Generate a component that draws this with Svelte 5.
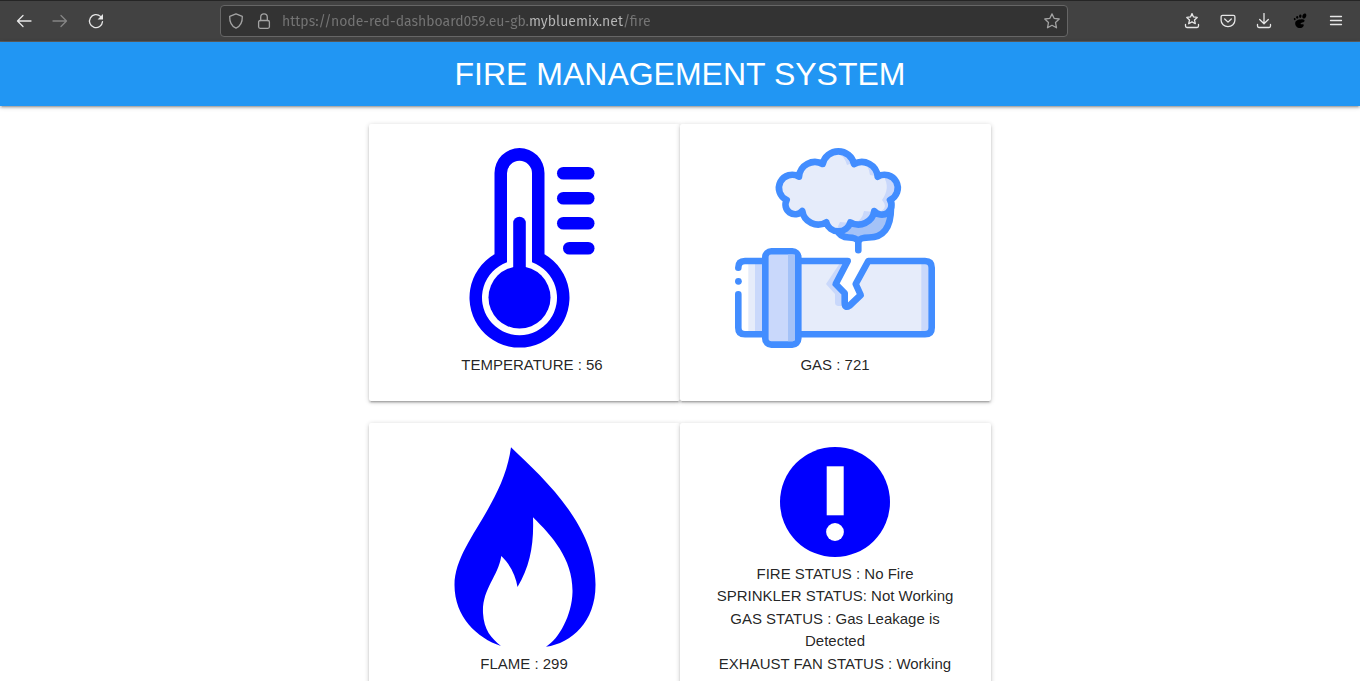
<script lang="ts">
  const url = 'https://node-red-dashboard059.eu-gb.mybluemix.net/fire';

  const readings = { temperature: 56, gas: 721, flame: 299 };

  const statuses = [
    'FIRE STATUS : No Fire',
    'SPRINKLER STATUS: Not Working',
    'GAS STATUS : Gas Leakage is Detected',
    'EXHAUST FAN STATUS : Working'
  ];
</script>

<div class="toolbar">
  <div class="tools">
    <button class="tool" aria-label="Back">
      <svg viewBox="0 0 16 16"><path d="M15 8H1.8M7 2.5 1.5 8 7 13.5" /></svg>
    </button>
    <button class="tool" aria-label="Forward" disabled>
      <svg viewBox="0 0 16 16"><path d="M1 8h13.2M9 2.5 14.5 8 9 13.5" /></svg>
    </button>
    <button class="tool" aria-label="Reload">
      <svg viewBox="0 0 16 16"><path d="M12.5 3.4A6.5 6.5 0 1 0 14.5 8.6" /><path d="M15 1v5.4H9.6z" fill="currentColor" stroke="none" /></svg>
    </button>
  </div>

  <div class="address">
    <div class="site">
      <svg viewBox="0 0 16 16"><path d="M8 .8 14.3 3.4C14.5 9 12.5 13 8 15.2 3.5 13 1.5 9 1.7 3.4z" /></svg>
      <svg viewBox="0 0 16 16"><rect x="2.6" y="7.5" width="10.8" height="7.8" rx="1.5" /><path d="M4.7 7.5V4.2a3.3 3.3 0 0 1 6.6 0v3.3" /></svg>
    </div>
    <input type="text" aria-label="Address" value={url} spellcheck="false" />
    <button class="bookmark" aria-label="Bookmark this page">
      <svg viewBox="0 0 16 16"><path d="M8 .9 10.1 5.3 15.2 6 11.5 9.5 12.5 14.8 8 12.3 3.5 14.8 4.5 9.5.8 6l5.1-.7z" /></svg>
    </button>
  </div>

  <div class="tools">
    <button class="tool" aria-label="Bookmarks">
      <svg viewBox="0 0 16 16"><path d="M8 .6 9.5 3.9 13.2 4.400 10.500 6.900 11.300 10.700 8 8.900 4.700 10.700 5.500 6.900 2.800 4.400 6.500 3.900z" /><path d="M1.500 11.500v1.600q0 1.400 1.400 1.400h10.200q1.400 0 1.400-1.400v-1.600" /></svg>
    </button>
    <button class="tool" aria-label="Save to Pocket">
      <svg viewBox="0 0 16 16"><path d="M2.6 2.3h10.8q1.5 0 1.5 1.5v3.4a6.9 6.4 0 0 1-13.8 0V3.8q0-1.5 1.5-1.5z" /><path d="M4.7 6 8 9.1 11.3 6" /></svg>
    </button>
    <button class="tool" aria-label="Downloads">
      <svg viewBox="0 0 16 16"><path d="M8 .5v10M3.7 6.500 8 10.800l4.300-4.300M1.500 11.500v1.600q0 1.400 1.400 1.400h10.200q1.400 0 1.400-1.400v-1.600" /></svg>
    </button>
    <button class="tool" aria-label="GNOME Shell integration">
      <svg viewBox="0 0 16 16" class="foot">
        <ellipse cx="12.300" cy="3" rx="1.800" ry="2.600" transform="rotate(22 12.300 3)" />
        <ellipse cx="8.300" cy="3.200" rx="1.200" ry="1.700" transform="rotate(10 8.300 3.200)" />
        <ellipse cx="5.200" cy="4.300" rx="1" ry="1.400" />
        <ellipse cx="2.700" cy="6.100" rx=".9" ry="1.200" transform="rotate(-15 2.700 6.100)" />
        <path d="M3.200 9.900C3.400 7.300 6.500 6.600 9.500 6.300 12 6.100 13.300 7.200 12.300 8.500 11.500 9.600 8.700 9.500 8.500 10.800 8.400 11.900 10.700 11 11.500 11.400 12.500 12.500 10.500 15 8.200 15 5 15 3 12.500 3.200 9.900z" />
      </svg>
    </button>
    <button class="tool" aria-label="Menu">
      <svg viewBox="0 0 16 16"><path d="M2.500 3.500h11M2.500 7.500h11M2.500 11.500h11" /></svg>
    </button>
  </div>
</div>

<header>
  <h1>FIRE MANAGEMENT SYSTEM</h1>
</header>

<main>
  <section class="card inset">
    <svg class="picture blue" viewBox="0 0 200 200" aria-hidden="true">
      <path d="M62.5 106.3V25a25 25 0 0 1 50 0v81.3A50 50 0 1 1 62.5 106.3z" />
      <path fill="#fff" d="M75 114.3V25.3a12.5 12.5 0 0 1 25 0v89A37.5 37.5 0 1 1 75 114.3z" />
      <circle cx="87.5" cy="149.5" r="31" />
      <rect x="81.2" y="68.7" width="12.6" height="60" rx="6.3" />
      <rect x="125" y="19" width="37.500" height="12.6" rx="6.3" />
      <rect x="125" y="44" width="37.500" height="12.6" rx="6.3" />
      <rect x="125" y="69" width="37.500" height="12.6" rx="6.3" />
      <rect x="131" y="94" width="31.500" height="12.6" rx="6.3" />
    </svg>
    <p>TEMPERATURE : {readings.temperature}</p>
  </section>

  <section class="card">
    <svg class="picture" viewBox="0 0 200 200" aria-hidden="true">
      <g stroke="#428dff" stroke-width="6.6" stroke-linecap="round" stroke-linejoin="round" fill="none">
        <path fill="#a4c2f7" d="M156 50V60C156 80 148 89.5 134 89.5C129 89.5 125 90 123.3 93C121 90 118 89.5 114 89.5C108 89.5 104 87 102 82z" />
        <path d="M123.3 92v10.3" />
        <path fill="#e6ecfa" stroke="none" d="M64 28.7A13.2 13.2 0 1 0 51.7 52A9.600 9.600 0 0 0 67.3 63A16 16 0 0 0 91.3 74.3A12.500 12.500 0 0 0 115.3 74.3A16 16 0 0 0 139.3 63A9.600 9.600 0 0 0 155 52A13.2 13.2 0 1 0 142.7 28.7A16 16 0 0 0 119 16A16 16 0 0 0 87.7 16A16 16 0 0 0 64 28.7z" />
        <g fill="#c9d8fb" stroke="none">
          <path d="M104 6q11 2 14 9l-6 2q-2-8-8-11z" />
          <path d="M126 12q14 3 15 16l-6-1q-1-10-9-15z" />
          <path d="M148 28a13 13 0 0 1 8 24l-4 10-8 2q10-4 3-12 9-13 1-24z" />
          <path d="M139 64q-6 14-21 12 9-3 11-13z" />
          <path d="M115 75q-5 8-13 8 1-6 3-9z" />
        </g>
        <path d="M64 28.7A13.2 13.2 0 1 0 51.7 52A9.600 9.600 0 0 0 67.3 63A16 16 0 0 0 91.3 74.3A12.500 12.500 0 0 0 115.3 74.3A16 16 0 0 0 139.3 63A9.600 9.600 0 0 0 155 52A13.2 13.2 0 1 0 142.7 28.7A16 16 0 0 0 119 16A16 16 0 0 0 87.7 16A16 16 0 0 0 64 28.7z" />
        <path stroke="none" fill="#e6ecfa" d="M13.3 116h7v68h-7z" />
        <path stroke="none" fill="#c9d8fb" d="M20 116h8v68h-8z" />
        <path stroke="none" fill="#e6ecfa" d="M65 113h47.7L100.7 136l9 9.3.3 13h4l12-11.3-5-11L133.3 113h63v73H65z" />
        <path stroke="none" fill="#c9d8fb" d="M186.3 115h8v70h-8zM105 115 91 136l9 10v8.500q0 3 3 3.500h5l2-12.500-9.300-9.500L112 115z" />
        <path d="M64 113h48.700L100.700 136l9 9.300V155q0 6 5 2.500l11-10.500-5-11L133.300 113h56.700q6.700 0 6.700 6.700v60q0 6.600-6.700 6.600H64" />
        <path d="M3.300 119.700q0-6.700 6.700-6.700h20M3.300 146.300v33.400q0 6.600 6.700 6.600h20" />
        <circle cx="3.400" cy="133.300" r="3.400" fill="#428dff" stroke="none" />
        <rect x="30.300" y="103.300" width="33" height="93.300" rx="6" fill="#c9d8fb" />
        <path stroke="none" fill="#a4c2f7" d="M53 106.600h7V191q0 2.300-2.300 2.300H53z" />
      </g>
    </svg>
    <p>GAS : {readings.gas}</p>
  </section>

  <section class="card">
    <svg class="picture blue" viewBox="0 0 200 200" aria-hidden="true">
      <path d="M87 .3C119 31 171 77 171.500 137C172 174 148 196 122 199.700C135 192 148 168 148.500 145C149 112 128 89 109 70.300C110 98 106 119 93.500 140C92 129 86 117 77.300 109C74 130 58 142 59 166C60 183 67 191 77 199C53 191 30.500 170 30.500 138C30.500 97 79 60 87 .3z" />
    </svg>
    <p>FLAME : {readings.flame}</p>
  </section>

  <section class="card">
    <svg class="picture small blue" viewBox="0 0 110 110" aria-hidden="true">
      <circle cx="55" cy="55" r="55" />
      <path fill="#fff" d="M46.700 19.300h17v49h-17z" />
      <circle fill="#fff" cx="55" cy="85" r="8.900" />
    </svg>
    {#each statuses as status}
      <p>{status}</p>
    {/each}
  </section>
</main>

<style>
  :global(html) {
    scrollbar-width: none;
  }

  :global(body) {
    margin: 0;
    background: #fff;
    color: rgba(0, 0, 0, 0.87);
    font: 15px/1.5 'Liberation Sans', Arial, sans-serif;
  }

  .toolbar {
    display: flex;
    align-items: center;
    justify-content: space-between;
    box-sizing: border-box;
    height: 42px;
    padding: 0 6px;
    border-top: 1px solid #252525;
    border-bottom: 1px solid #5c5c5c;
    background: #424242;
  }

  .tools {
    display: flex;
  }

  button {
    display: grid;
    place-items: center;
    padding: 0;
    border: 0;
    background: none;
    color: #e6e6e6;
  }

  .tool {
    width: 36px;
    height: 32px;
  }

  .tool:disabled {
    color: #858585;
  }

  .toolbar svg {
    flex: none;
    width: 16px;
    height: 16px;
    fill: none;
    stroke: currentColor;
    stroke-width: 1.3;
    stroke-linecap: round;
    stroke-linejoin: round;
  }

  .toolbar .foot {
    fill: #000;
    stroke: none;
  }

  .address {
    display: flex;
    align-items: center;
    gap: 10px;
    box-sizing: border-box;
    width: 63%;
    max-width: 848px;
    height: 32px;
    padding: 0 7px;
    border: 1px solid #666;
    border-radius: 4px;
    background: #333;
    color: #a3a3a3;
  }

  .site {
    display: flex;
    gap: 12px;
  }

  input {
    flex: 1;
    min-width: 0;
    padding: 2px 0 0;
    border: 0;
    outline: 0;
    background: linear-gradient(90deg, #757575 247px, #b8b8b8 247px 342px, #757575 342px);
    background-clip: text;
    -webkit-background-clip: text;
    color: transparent;
    font: 14px/20px 'Fira Sans', 'Noto Sans', sans-serif;
  }

  .bookmark {
    color: #a3a3a3;
  }

  header {
    position: relative;
    background: #2196f3;
    box-shadow:
      0 2px 2px 0 rgba(0, 0, 0, 0.14),
      0 3px 1px -2px rgba(0, 0, 0, 0.12),
      0 1px 5px 0 rgba(0, 0, 0, 0.2);
  }

  h1 {
    margin: 0;
    color: #fff;
    font-size: 32px;
    font-weight: 400;
    line-height: 64px;
    text-align: center;
  }

  main {
    display: grid;
    grid-template-columns: 1fr 1fr;
    row-gap: 22px;
    max-width: 622px;
    margin: 18px auto;
  }

  .card {
    padding: 24px 25px 24px 24px;
    border-radius: 2px;
    background: #fff;
    text-align: center;
    box-shadow:
      0 2px 2px 0 rgba(0, 0, 0, 0.14),
      0 3px 1px -2px rgba(0, 0, 0, 0.12),
      0 1px 5px 0 rgba(0, 0, 0, 0.2);
  }

  .inset {
    padding-left: 40px;
  }

  .picture {
    display: block;
    width: 200px;
    height: 200px;
    margin: 0 auto 6px;
  }

  .small {
    width: 110px;
    height: 110px;
  }

  .blue {
    fill: #00f;
  }

  p {
    margin: 0;
  }
</style>
